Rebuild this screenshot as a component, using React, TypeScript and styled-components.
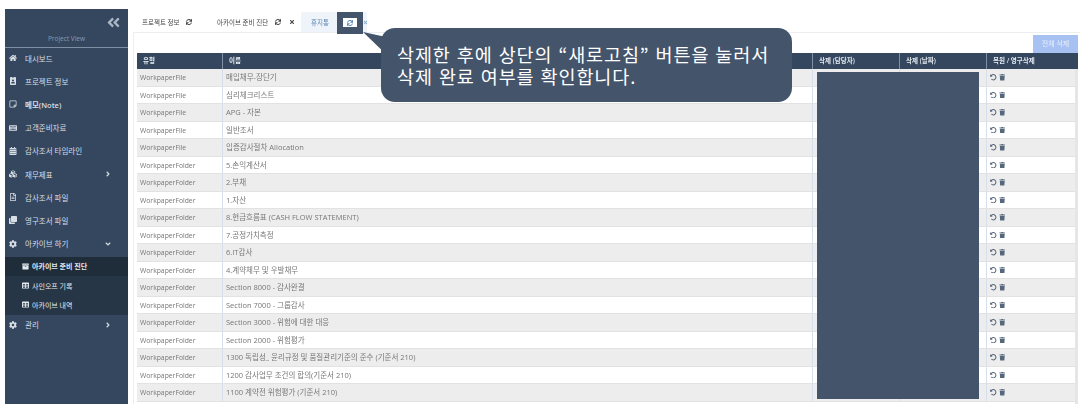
import React from "react";
import styled, { createGlobalStyle } from "styled-components";
import {
  FaHome, FaIdBadge, FaRegStickyNote, FaKeyboard, FaCalendarAlt, FaCubes, FaRegFileAlt, FaClone,
  FaCog, FaAngleRight, FaAngleDown, FaAngleDoubleLeft, FaSync, FaTimes, FaUndoAlt, FaTrash, FaArchive, FaTable,
} from "react-icons/fa";

const Global = createGlobalStyle`
  html, body { margin: 0; padding: 0; background: #fff; }
  * { box-sizing: border-box; }
  #root { width: 1086px; height: 411px; overflow: hidden; position: relative; }
`;

const Page = styled.div`
  display: flex;
  width: 1086px;
  height: 411px;
  padding: 9px 0 0 5px;
  font-family: "Open Sans", "Noto Sans CJK KR", sans-serif;
  filter: blur(0.45px);
`;

const Sidebar = styled.aside`
  width: 123px;
  height: 395px;
  flex: none;
  background: #34475f;
  color: #e4e9ef;
  display: flex;
  flex-direction: column;
`;

const Collapse = styled.div`
  height: 21px;
  display: flex;
  justify-content: flex-end;
  align-items: flex-end;
  padding-right: 7px;
  color: #aab6c4;
  font-size: 15px;
  line-height: 0;
`;

const ProjectView = styled.div`
  height: 18px;
  border-bottom: 1px solid #7f90a5;
  text-align: center;
  font-size: 6.5px;
  line-height: 18px;
  color: #8d9bad;
`;

const MenuItem = styled.div<{ $bold?: boolean }>`
  height: 23.2px;
  display: flex;
  align-items: center;
  padding: 0 8px 3px 4px;
  font-size: 7.5px;
  font-weight: ${(p) => (p.$bold ? 600 : 400)};
  color: #d8dee6;
  svg:first-child { width: 8px; height: 8px; flex: none; margin-right: 8px; }
`;

const Caret = styled.span`
  margin-left: auto;
  display: flex;
  font-size: 7px;
  color: #d5dce4;
`;

const SubMenu = styled.div`
  background: #263647;
  display: flex;
  flex-direction: column;
`;

const SubItem = styled.div<{ $active?: boolean }>`
  height: 19.3px;
  display: flex;
  align-items: center;
  padding-left: 17px;
  gap: 3px;
  font-size: 7px;
  font-weight: ${(p) => (p.$active ? 700 : 400)};
  background: ${(p) => (p.$active ? "#1f2c3a" : "transparent")};
  color: #e4e9ef;
  svg { width: 7px; height: 7px; flex: none; }
`;

const Main = styled.main`
  flex: 1;
  min-width: 0;
  margin-left: 5px;
  padding-top: 3px;
  display: flex;
  flex-direction: column;
`;

const Tabs = styled.div`
  display: flex;
  height: 20px;
  align-items: stretch;
  width: 947px;
`;

const Tab = styled.div<{ $active?: boolean; $w: number }>`
  width: ${(p) => p.$w}px;
  display: flex;
  align-items: center;
  padding-left: ${(p) => (p.$active ? 10 : 9)}px;
  font-size: 6.5px;
  color: ${(p) => (p.$active ? "#5a86b8" : "#444")};
  background: ${(p) => (p.$active ? "#eef4fa" : "transparent")};
  border-radius: 2px 2px 0 0;
  svg { flex: none; width: 6px; height: 6px; }
`;

const TabIcon = styled.span<{ $gap: number }>`
  display: flex;
  margin-left: ${(p) => p.$gap}px;
`;

const Panel = styled.section`
  width: 947px;
  height: 372px;
  border-top: 1px solid #eceff2;
  border-left: 1px solid #eceff2;
  padding: 2px 2px 0 3px;
  display: flex;
  flex-direction: column;
`;

const Toolbar = styled.div`
  height: 18px;
  display: flex;
  justify-content: flex-end;
`;

const DeleteAll = styled.div`
  width: 45px;
  height: 18px;
  background: #a6c1f2;
  color: #e8f0fb;
  font-size: 7px;
  line-height: 18px;
  text-align: center;
`;

const Header = styled.div`
  display: grid;
  grid-template-columns: 86px 590px 87px 87px 91px;
  height: 16px;
  background: #34475f;
  color: #e6ebf1;
  font-size: 6.5px;
  font-weight: 600;
  line-height: 16px;
`;

const HeadCell = styled.div`
  padding-left: 6px;
  border-right: 1px solid #7f90a5;
  &:last-child { border-right: 0; }
`;

const Body = styled.div`
  border-right: 3px solid #e6e6e6;
  height: 336px;
`;

const Row = styled.div<{ $odd: boolean }>`
  display: grid;
  grid-template-columns: 86px 590px 87px 87px 88px;
  height: 17.5px;
  background: ${(p) => (p.$odd ? "#ededed" : "#fff")};
  border-bottom: 1px solid #e2e2e2;
  line-height: 17px;
  color: #777;
`;

const Cell = styled.div<{ $size?: number }>`
  padding-left: 3px;
  border-right: 1px solid #d5e0ec;
  white-space: nowrap;
  overflow: hidden;
  font-size: ${(p) => p.$size ?? 7}px;
  &:last-child { border-right: 0; }
`;

const Actions = styled(Cell)`
  padding-left: 3px;
  display: flex;
  align-items: center;
  gap: 2px;
  color: #56677b;
  svg { width: 6.5px; height: 6.5px; }
`;

const Highlight = styled.div`
  position: absolute;
  left: 337px;
  top: 12px;
  width: 26px;
  height: 22px;
  border: solid #44546a;
  border-width: 6px 6px 7px 6px;
  background: #fff;
  color: #5a86b8;
  display: flex;
  align-items: center;
  justify-content: center;
  svg { width: 6px; height: 6px; }
`;

const TabClose = styled.div`
  position: absolute;
  left: 363px;
  top: 20px;
  color: #8fb0d0;
  display: flex;
  svg { width: 5px; height: 5px; }
`;

const Pointer = styled.svg`
  position: absolute;
  left: 360px;
  top: 28px;
  width: 40px;
  height: 40px;
`;

const Callout = styled.div`
  position: absolute;
  left: 381px;
  top: 28px;
  width: 411px;
  height: 74px;
  border-radius: 14px;
  background: #44546a;
  color: #fff;
  padding: 15px 0 0 16px;
  font-family: "Noto Sans CJK KR", sans-serif;
  font-size: 18.5px;
  line-height: 22px;
  letter-spacing: 0.9px;
  word-spacing: 1px;
  white-space: nowrap;
`;

const Redact = styled.div`
  position: absolute;
  left: 817px;
  top: 72px;
  width: 162px;
  height: 327px;
  background: #44546a;
`;

const rows: [string, string][] = [
  ["WorkpaperFile", "매입채무-장단기"],
  ["WorkpaperFile", "심리체크리스트"],
  ["WorkpaperFile", "APG - 자본"],
  ["WorkpaperFile", "일반조서"],
  ["WorkpaperFile", "입증감사절차 Allocation"],
  ["WorkpaperFolder", "5.손익계산서"],
  ["WorkpaperFolder", "2.부채"],
  ["WorkpaperFolder", "1.자산"],
  ["WorkpaperFolder", "8.현금흐름표 (CASH FLOW STATEMENT)"],
  ["WorkpaperFolder", "7.공정가치측정"],
  ["WorkpaperFolder", "6.IT감사"],
  ["WorkpaperFolder", "4.계약체무 및 우발채무"],
  ["WorkpaperFolder", "Section 8000 - 감사완결"],
  ["WorkpaperFolder", "Section 7000 - 그룹감사"],
  ["WorkpaperFolder", "Section 3000 - 위험에 대한 대응"],
  ["WorkpaperFolder", "Section 2000 - 위험평가"],
  ["WorkpaperFolder", "1300 독립성_ 윤리규정 및 품질관리기준의 준수 (기준서 210)"],
  ["WorkpaperFolder", "1200 감사업무 조건의 합의(기준서 210)"],
  ["WorkpaperFolder", "1100 계약전 위험평가 (기준서 210)"],
];

export default function App() {
  return (
    <>
      <Global />
      <Page>
        <Sidebar>
          <Collapse><FaAngleDoubleLeft /></Collapse>
          <ProjectView>Project View</ProjectView>
          <MenuItem><FaHome />대시보드</MenuItem>
          <MenuItem><FaIdBadge />프로젝트 정보</MenuItem>
          <MenuItem $bold><FaRegStickyNote />메모(Note)</MenuItem>
          <MenuItem><FaKeyboard />고객준비자료</MenuItem>
          <MenuItem><FaCalendarAlt />감사조서 타임라인</MenuItem>
          <MenuItem><FaCubes />재무제표<Caret><FaAngleRight /></Caret></MenuItem>
          <MenuItem><FaRegFileAlt />감사조서 파일</MenuItem>
          <MenuItem><FaClone />영구조서 파일</MenuItem>
          <MenuItem><FaCog />아카이브 하기<Caret><FaAngleDown /></Caret></MenuItem>
          <SubMenu>
            <SubItem $active><FaArchive />아카이브 준비 진단</SubItem>
            <SubItem><FaTable />사인오프 기록</SubItem>
            <SubItem><FaTable />아카이브 내역</SubItem>
          </SubMenu>
          <MenuItem><FaCog />관리<Caret><FaAngleRight /></Caret></MenuItem>
        </Sidebar>
        <Main>
          <Tabs>
            <Tab $w={75}>프로젝트 정보<TabIcon $gap={6}><FaSync /></TabIcon></Tab>
            <Tab $w={93}>아카이브 준비 진단<TabIcon $gap={7}><FaSync /></TabIcon><TabIcon $gap={8}><FaTimes /></TabIcon></Tab>
            <Tab $active $w={66}>휴지통</Tab>
          </Tabs>
          <Panel>
            <Toolbar><DeleteAll>전체 삭제</DeleteAll></Toolbar>
            <Header>
              <HeadCell>유형</HeadCell>
              <HeadCell>이름</HeadCell>
              <HeadCell>삭제 (담당자)</HeadCell>
              <HeadCell>삭제 (날짜)</HeadCell>
              <HeadCell>복원 / 영구삭제</HeadCell>
            </Header>
            <Body>
              {rows.map(([type, name], i) => (
                <Row key={i} $odd={i % 2 === 0}>
                  <Cell $size={6.8}>{type}</Cell>
                  <Cell $size={7.5}>{name}</Cell>
                  <Cell />
                  <Cell />
                  <Actions><FaUndoAlt /><FaTrash /></Actions>
                </Row>
              ))}
            </Body>
          </Panel>
        </Main>
      </Page>
      <TabClose><FaTimes /></TabClose>
      <Redact />
      <Pointer viewBox="0 0 40 40"><polygon points="3,4 26,9 32,32" fill="#44546a" /></Pointer>
      <Highlight><FaSync /></Highlight>
      <Callout>삭제한 후에 상단의 “새로고침” 버튼을 눌러서<br />삭제 완료 여부를 확인합니다.</Callout>
    </>
  );
}
